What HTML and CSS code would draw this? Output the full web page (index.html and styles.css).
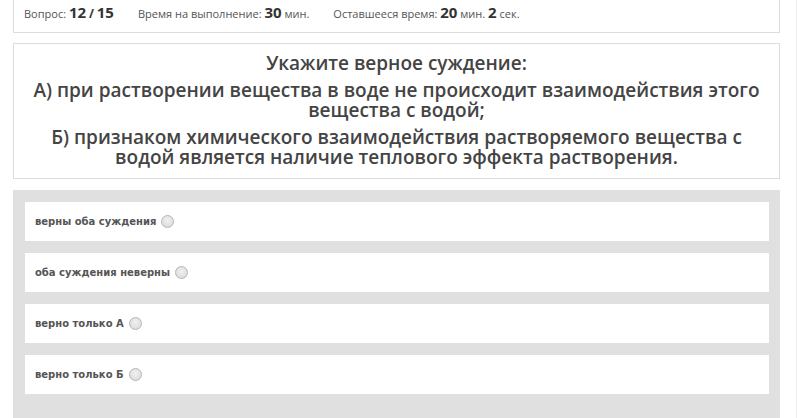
FILE: index.html
```html
<!DOCTYPE html>
<html lang="ru">
<head>
<meta charset="utf-8">
<title>Тест</title>
<link rel="stylesheet" href="styles.css">
</head>
<body>
<div class="page">
  <div class="status">
    <span class="stat">Вопрос: <b>12</b> <b class="slash">/</b> <b>15</b></span>
    <span class="stat">Время на выполнение: <b>30</b> мин.</span>
    <span class="stat">Оставшееся время: <b>20</b> мин. <b>2</b> сек.</span>
  </div>
  <div class="question">
    <p class="q-title">Укажите верное суждение:</p>
    <p class="q-line">А) при растворении вещества в воде не происходит взаимодействия этого вещества с водой;</p>
    <p class="q-line">Б) признаком химического взаимодействия растворяемого вещества с водой является наличие теплового эффекта растворения.</p>
  </div>
  <div class="answers">
    <label class="answer"><span class="a-text">верны оба суждения</span><span class="radio"></span></label>
    <label class="answer"><span class="a-text">оба суждения неверны</span><span class="radio"></span></label>
    <label class="answer"><span class="a-text">верно только А</span><span class="radio"></span></label>
    <label class="answer"><span class="a-text">верно только Б</span><span class="radio"></span></label>
  </div>
</div>
</body>
</html>
```
FILE: styles.css
```css
html, body {
  margin: 0;
  padding: 0;
  background: #fff;
}
body {
  font-family: "Open Sans", "DejaVu Sans", sans-serif;
  color: #444;
  overflow: hidden;
  height: 418px;
  border-right: 1px solid #ececec;
  box-sizing: border-box;
  width: 797px;
}
.page {
  margin: -10px 0 0 13px;
  width: 767px;
}
.status {
  height: 43px;
  box-sizing: border-box;
  border: 1px solid #dcdcdc;
  border-top: none;
  background: #fff;
  display: flex;
  align-items: flex-end;
  padding: 0 0 10px 10px;
  font-size: 11px;
  color: #555;
}
.stat {
  margin-right: 24px;
}
.stat b {
  font-size: 15px;
  font-weight: 700;
  color: #333;
}
.stat b.slash {
  font-size: 12px;
}
.question {
  margin-top: 10px;
  border: 1px solid #dcdcdc;
  padding: 9px 15px 11px;
  text-align: center;
  color: #444;
}
.question p {
  margin: 0;
  font-weight: 600;
  font-size: 19px;
  line-height: 20px;
}
.question .q-title {
  margin-bottom: 7px;
}
.question .q-line + .q-line {
  margin-top: 7px;
}
.answers {
  margin-top: 11px;
  background: #e0e0e0;
  padding: 12px 11px 30px 12px;
  display: flex;
  flex-direction: column;
  gap: 12px;
}
.answer {
  height: 39px;
  background: #fff;
  display: flex;
  align-items: center;
  padding-left: 10px;
  font-family: "DejaVu Sans", sans-serif;
  font-weight: bold;
  font-size: 10px;
  color: #555;
}
.radio {
  width: 11px;
  height: 11px;
  border-radius: 50%;
  border: 1px solid #b5b5b5;
  background: radial-gradient(circle at 50% 40%, #f0f0f0, #d8d8d8);
  margin-left: 5px;
}
```
